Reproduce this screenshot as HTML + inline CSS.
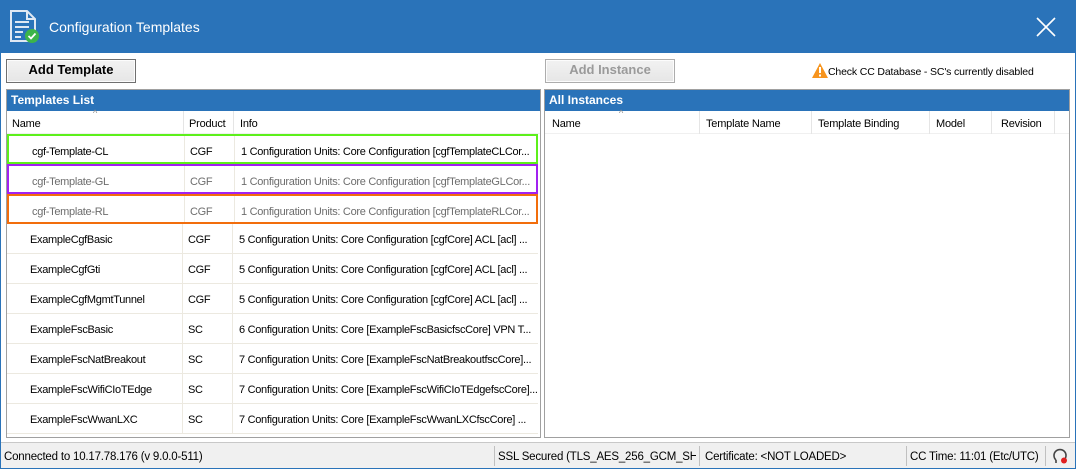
<!DOCTYPE html>
<html><head><style>
*{margin:0;padding:0;box-sizing:border-box}
body{width:1076px;height:469px;overflow:hidden;font-family:"Liberation Sans",sans-serif;font-size:11.5px;color:#000;background:#2a73b9;position:relative}
.abs{position:absolute}
#body{left:1px;top:53px;width:1074px;height:415px;background:#fff}
.title{left:49px;top:19px;color:#fff;font-size:14px}
.btn{border:1px solid #707070;background:linear-gradient(#f2f2f2,#e6e6e6);font-weight:bold;font-size:13px;text-align:center;line-height:20px;box-shadow:inset 0 0 0 1px #fcfcfc}
.panel{border:1px solid #a0a0a0;background:#fff;overflow:hidden}
.ph{height:21px;background:#2a73b9;color:#fff;font-weight:bold;font-size:12px;padding:3px 4px}
.hdr{height:23px;position:relative;border-bottom:1px solid #f0f0f0;font-size:11px;letter-spacing:-0.2px}
.hdr span{position:absolute;top:7px}
.vl{position:absolute;top:0;width:1px;height:23px;background:#e5e5e5}
.row{position:absolute;left:0;height:30px;width:531px;border-bottom:1px solid #ece9e0;font-size:11px;letter-spacing:-0.3px;overflow:hidden}
.row span{position:absolute;top:10px;white-space:nowrap}
.row .c1{left:23px}.row .c2{left:181px}.row .c3{left:232px}
.row .v1{position:absolute;left:175px;top:0;width:1px;height:30px;background:#ece9e0}
.row .v2{position:absolute;left:225px;top:0;width:1px;height:30px;background:#ece9e0}
.g{color:#6d6d6d}
.status{left:1px;top:442px;width:1074px;height:26px;background:#f0f0f0;border-top:1px solid #c8c8c8;font-size:11.5px;letter-spacing:-0.2px}
.status span{position:absolute;top:8px;white-space:nowrap}
.sep{position:absolute;top:3px;width:1px;height:20px;background:#c0c0c0}
</style></head><body>
<svg class="abs" style="left:9px;top:10px" width="32" height="34" viewBox="0 0 32 34">
<path d="M2 1h16l8 8v22H2z" fill="none" stroke="#dfe8f3" stroke-width="2"/>
<path d="M18 1v8h8" fill="none" stroke="#dfe8f3" stroke-width="2"/>
<path d="M6 12h14M6 17h14M6 22h8M6 27h6" stroke="#dfe8f3" stroke-width="2"/>
<circle cx="23" cy="26" r="7" fill="#3cb44a"/>
<path d="M19.5 26l2.5 2.5 4.5-5" fill="none" stroke="#fff" stroke-width="1.8"/>
</svg>
<div class="abs title">Configuration Templates</div>
<svg class="abs" style="left:1036px;top:17px" width="20" height="20"><path d="M1 1L19 19M19 1L1 19" stroke="#fff" stroke-width="1.6"/></svg>
<div id="body" class="abs"></div>
<div class="abs btn" style="left:6px;top:59px;width:130px;height:24px">Add Template</div>
<div class="abs btn" style="left:545px;top:59px;width:130px;height:24px;color:#9a9a9a;border-color:#adadad">Add Instance</div>
<svg class="abs" style="left:812px;top:63px" width="16" height="15"><path d="M8 0L16 15H0z" fill="#f7941d"/><rect x="7" y="4" width="2" height="6" fill="#fff"/><rect x="7" y="11.5" width="2" height="2" fill="#fff"/></svg>
<div class="abs" style="left:828px;top:66px;font-size:10.5px;letter-spacing:-0.15px">Check CC Database - SC's currently disabled</div>

<div class="abs panel" style="left:6px;top:89px;width:535px;height:349px">
 <div class="ph">Templates List</div>
 <div class="hdr"><span style="left:5px">Name</span><span style="left:182px">Product</span><span style="left:233px">Info</span>
 <div class="vl" style="left:176px"></div><div class="vl" style="left:226px"></div>
 <span style="left:86px;top:-3px;font-size:9px;color:#888">^</span></div>
 <div style="position:relative">
  <div class="row" style="top:0;border:2px solid #5df01b"><div class="v1"></div><div class="v2"></div><span class="c1">cgf-Template-CL</span><span class="c2">CGF</span><span class="c3">1 Configuration Units: Core Configuration [cgfTemplateCLCor...</span></div>
  <div class="row g" style="top:30px;border:2px solid #a221f0"><div class="v1"></div><div class="v2"></div><span class="c1">cgf-Template-GL</span><span class="c2">CGF</span><span class="c3">1 Configuration Units: Core Configuration [cgfTemplateGLCor...</span></div>
  <div class="row g" style="top:60px;border:2px solid #f26d0c"><div class="v1"></div><div class="v2"></div><span class="c1">cgf-Template-RL</span><span class="c2">CGF</span><span class="c3">1 Configuration Units: Core Configuration [cgfTemplateRLCor...</span></div>
  <div class="row" style="top:90px"><div class="v1"></div><div class="v2"></div><span class="c1">ExampleCgfBasic</span><span class="c2">CGF</span><span class="c3">5 Configuration Units: Core Configuration [cgfCore] ACL [acl] ...</span></div>
  <div class="row" style="top:120px"><div class="v1"></div><div class="v2"></div><span class="c1">ExampleCgfGti</span><span class="c2">CGF</span><span class="c3">5 Configuration Units: Core Configuration [cgfCore] ACL [acl] ...</span></div>
  <div class="row" style="top:150px"><div class="v1"></div><div class="v2"></div><span class="c1">ExampleCgfMgmtTunnel</span><span class="c2">CGF</span><span class="c3">5 Configuration Units: Core Configuration [cgfCore] ACL [acl] ...</span></div>
  <div class="row" style="top:180px"><div class="v1"></div><div class="v2"></div><span class="c1">ExampleFscBasic</span><span class="c2">SC</span><span class="c3">6 Configuration Units: Core [ExampleFscBasicfscCore] VPN T...</span></div>
  <div class="row" style="top:210px"><div class="v1"></div><div class="v2"></div><span class="c1">ExampleFscNatBreakout</span><span class="c2">SC</span><span class="c3">7 Configuration Units: Core [ExampleFscNatBreakoutfscCore]...</span></div>
  <div class="row" style="top:240px"><div class="v1"></div><div class="v2"></div><span class="c1">ExampleFscWifiCIoTEdge</span><span class="c2">SC</span><span class="c3">7 Configuration Units: Core [ExampleFscWifiCIoTEdgefscCore]...</span></div>
  <div class="row" style="top:270px"><div class="v1"></div><div class="v2"></div><span class="c1">ExampleFscWwanLXC</span><span class="c2">SC</span><span class="c3">7 Configuration Units: Core [ExampleFscWwanLXCfscCore] ...</span></div>
 </div>
</div>

<div class="abs panel" style="left:544px;top:89px;width:526px;height:349px">
 <div class="ph">All Instances</div>
 <div class="hdr"><span style="left:7px">Name</span><span style="left:161px">Template Name</span><span style="left:273px">Template Binding</span><span style="left:391px">Model</span><span style="left:456px">Revision</span>
 <div class="vl" style="left:154px"></div><div class="vl" style="left:266px"></div><div class="vl" style="left:384px"></div><div class="vl" style="left:446px"></div><div class="vl" style="left:509px"></div>
 <span style="left:74px;top:-3px;font-size:9px;color:#888">^</span></div>
</div>

<div class="abs status">
 <span style="left:3px">Connected to 10.17.78.176 (v 9.0.0-511)</span>
 <div class="sep" style="left:493px"></div>
 <span style="left:497px;width:198px;overflow:hidden">SSL Secured (TLS_AES_256_GCM_SHA</span>
 <div class="sep" style="left:698px"></div>
 <span style="left:704px">Certificate: &lt;NOT LOADED&gt;</span>
 <div class="sep" style="left:905px"></div>
 <span style="left:909px">CC Time: 11:01 (Etc/UTC)</span>
 <div class="sep" style="left:1044px"></div>
 <svg style="position:absolute;left:1051px;top:5px" width="16" height="16"><path d="M4 12A6 6 0 1 1 12 12" fill="none" stroke="#444" stroke-width="1.6"/><path d="M4 12v3" stroke="#444" stroke-width="1.6"/><circle cx="12" cy="12.5" r="3" fill="#e02020"/></svg>
</div>
</body></html>
